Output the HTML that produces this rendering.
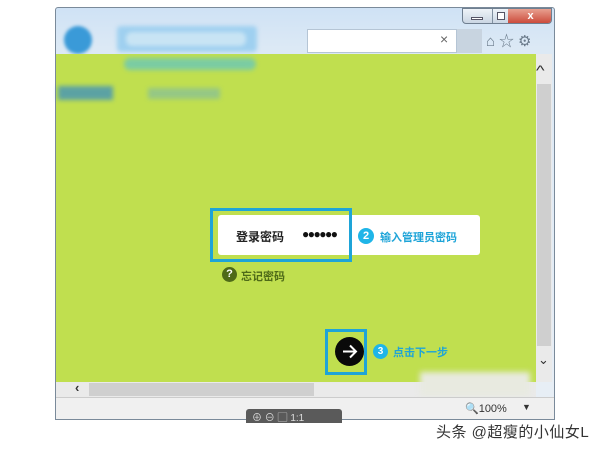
<!DOCTYPE html>
<html><head><meta charset="utf-8"><style>
*{margin:0;padding:0;box-sizing:border-box}
body{width:600px;height:450px;background:#fff;position:relative;overflow:hidden;font-family:"Liberation Sans","Noto Sans CJK SC",sans-serif}
.a{position:absolute}
</style></head><body>
<div class="a" style="left:55px;top:7px;width:500px;height:413px;background:linear-gradient(#cfe2f5,#dce9f5 40px,#e8eef5);border:1px solid #7a8a9a;border-radius:3px 3px 0 0"></div>
<div class="a" style="left:462px;top:8px;width:90px;height:16px;border:1px solid #6f7f90;border-radius:0 0 4px 4px;background:linear-gradient(#eef3f8,#cad6e3);overflow:hidden">
 <div class="a" style="left:29px;top:0;width:1px;height:16px;background:#8090a0"></div>
 <div class="a" style="left:8px;top:8px;width:12px;height:3px;background:#fff;border:1px solid #556"></div>
 <div class="a" style="left:34px;top:3px;width:8px;height:8px;border:1px solid #556;background:#fff"></div>
 <div class="a" style="left:45px;top:0;width:45px;height:16px;background:linear-gradient(#e8a090,#c84030);color:#fff;font-size:11px;font-weight:bold;text-align:center;line-height:15px">x</div>
</div>
<div class="a" style="left:64px;top:26px;width:28px;height:28px;border-radius:50%;background:#3a9ad8;filter:blur(1.5px)"></div>
<div class="a" style="left:117px;top:26px;width:140px;height:26px;background:#9fd0f0;border-radius:4px;filter:blur(2px)"></div>
<div class="a" style="left:126px;top:32px;width:120px;height:14px;background:#c8e4f4;border-radius:6px;filter:blur(2px)"></div>
<div class="a" style="left:307px;top:29px;width:150px;height:24px;background:#fff;border:1px solid #b5c5d5"></div>
<div class="a" style="left:440px;top:31px;font-size:14px;color:#666">×</div>
<div class="a" style="left:457px;top:29px;width:25px;height:24px;background:#c8d4e0"></div>
<div class="a" style="left:486px;top:30px;font-size:15px;color:#6a7a8a;letter-spacing:4px">⌂☆⚙</div>
<div class="a" style="left:56px;top:54px;width:480px;height:328px;background:#c0df4f"></div>
<div class="a" style="left:124px;top:58px;width:132px;height:12px;background:#6ac8b8;border-radius:6px;filter:blur(2.5px);opacity:.8"></div>
<div class="a" style="left:58px;top:86px;width:55px;height:14px;background:#3a8ec0;filter:blur(2.5px);opacity:.75"></div>
<div class="a" style="left:148px;top:88px;width:72px;height:11px;background:#7ab8a8;filter:blur(2.5px);opacity:.6"></div>
<div class="a" style="left:536px;top:54px;width:16px;height:328px;background:#eaeaea"></div>
<div class="a" style="left:537px;top:84px;width:14px;height:262px;background:#cfcfcf"></div>
<div class="a" style="left:537px;top:62px;font-size:14px;color:#333;transform:scaleX(1.3)">^</div>
<div class="a" style="left:538px;top:352px;font-size:13px;color:#333">⌄</div>
<div class="a" style="left:218px;top:215px;width:262px;height:40px;background:#fff;border-radius:3px"></div>
<div class="a" style="left:210px;top:208px;width:142px;height:54px;border:3px solid #1ea4d8"></div>
<div class="a" style="left:236px;top:228px;font-size:12px;font-weight:bold;color:#222">登录密码</div>
<div class="a" style="left:302px;top:227px;font-size:12px;color:#111;letter-spacing:-1.5px">●●●●●●</div>
<div class="a" style="left:358px;top:228px;width:16px;height:16px;border-radius:50%;background:#1fb5e8;color:#fff;font-size:11px;font-weight:bold;text-align:center;line-height:16px">2</div>
<div class="a" style="left:380px;top:229px;font-size:11px;font-weight:bold;color:#1ea4d8">输入管理员密码</div>
<div class="a" style="left:222px;top:267px;width:15px;height:15px;border-radius:50%;background:#4e6a18;color:#fff;font-size:11px;font-weight:bold;text-align:center;line-height:15px">?</div>
<div class="a" style="left:241px;top:268px;font-size:11px;font-weight:bold;color:#4e6a18">忘记密码</div>
<div class="a" style="left:325px;top:329px;width:42px;height:46px;border:3px solid #1ea4d8"></div>
<div class="a" style="left:335px;top:337px;width:29px;height:29px;border-radius:50%;background:#0a0a0a"></div>
<svg class="a" style="left:335px;top:337px" width="29" height="29"><path d="M8 14.5H21M15 8.5L21 14.5L15 20.5" stroke="#fff" stroke-width="2" fill="none"/></svg>
<div class="a" style="left:373px;top:344px;width:15px;height:15px;border-radius:50%;background:#1fb5e8;color:#fff;font-size:10px;font-weight:bold;text-align:center;line-height:15px">3</div>
<div class="a" style="left:393px;top:344px;font-size:11px;font-weight:bold;color:#1ea4d8">点击下一步</div>
<div class="a" style="left:56px;top:382px;width:480px;height:15px;background:#eaeaea"></div>
<div class="a" style="left:89px;top:383px;width:225px;height:13px;background:#cfcfcf"></div>
<div class="a" style="left:75px;top:380px;font-size:13px;font-weight:bold;color:#333">‹</div>
<div class="a" style="left:420px;top:372px;width:110px;height:24px;background:#e8eae0;filter:blur(3px)"></div>
<div class="a" style="left:56px;top:397px;width:498px;height:22px;background:#f0f0f0;border-top:1px solid #ccc"></div>
<div class="a" style="left:465px;top:402px;font-size:11px;color:#333">🔍100%</div>
<div class="a" style="left:522px;top:402px;font-size:9px;color:#333">▼</div>
<div class="a" style="left:246px;top:409px;width:96px;height:14px;background:#5a5a5a;border-radius:3px 3px 0 0;color:#ddd;font-size:10px;padding-left:6px">⊕ ⊖ ▢ 1:1</div>
<div class="a" style="left:436px;top:421px;font-size:15px;color:#333;letter-spacing:0.5px">头条 @超瘦的小仙女L</div>
</body></html>
